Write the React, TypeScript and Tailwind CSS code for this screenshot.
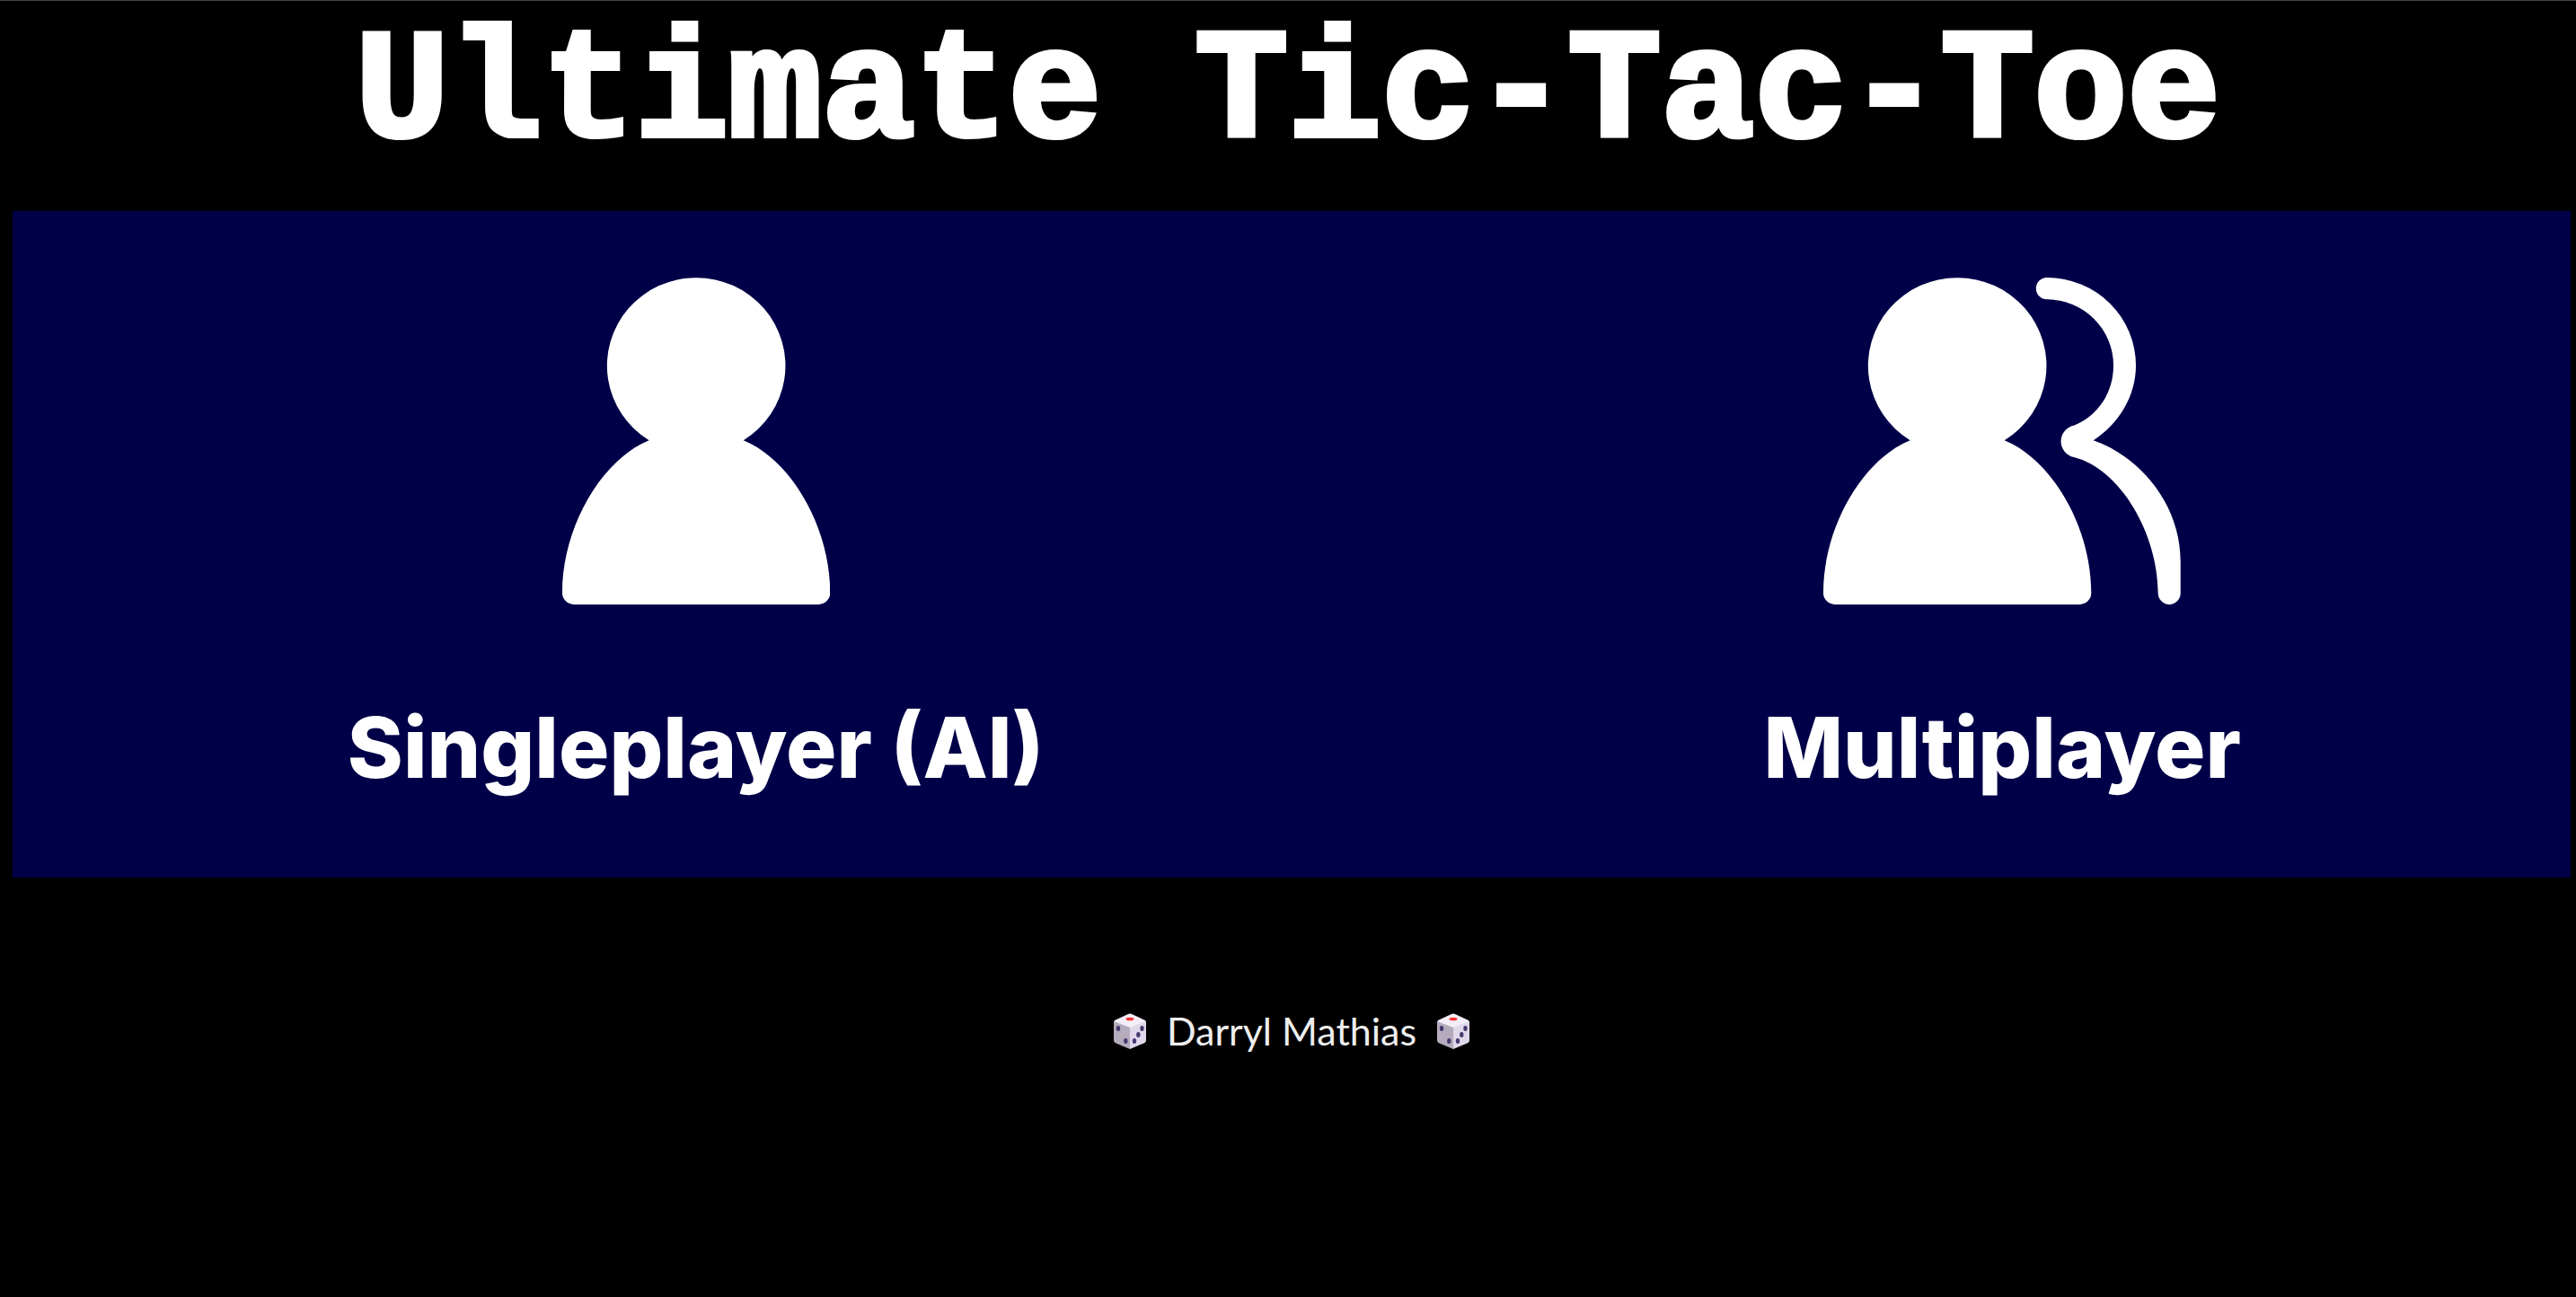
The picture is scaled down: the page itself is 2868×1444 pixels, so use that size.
import type { ReactNode } from "react";

const HEAD_AND_BODY =
  "M96.6 181.3A99.3 98 0 1 1 201.7 181.3C255 203 298.3 278 298.3 351A13 13 0 0 1 285.5 364H12.8A13 13 0 0 1 0 351C0 278 43.3 203 96.6 181.3Z";

const SECOND_PERSON =
  "M249 0A99 98 0 0 1 348 98C348 132 329 163 300.7 181.3C352 199 397.7 252 397.7 316V351.5A12.5 12.5 0 0 1 372.7 351.5C372.7 286 331 213 279 200A18 18 0 0 1 279 164.700C306 154 323 128 323 98A74 73.700 0 0 0 249 24.300A12.100 12.100 0 0 1 249 0Z";

function PersonIcon() {
  return (
    <svg viewBox="0 0 298 364" className="h-[364px] w-[298px]" fill="white" aria-hidden="true">
      <path d={HEAD_AND_BODY} />
    </svg>
  );
}

function PeopleIcon() {
  return (
    <svg viewBox="0 0 398 364" className="h-[364px] w-[398px]" fill="white" aria-hidden="true">
      <path d={HEAD_AND_BODY} />
      <path d={SECOND_PERSON} />
    </svg>
  );
}

function Die() {
  return (
    <svg viewBox="0 0 38 40" className="h-10 w-[38px]" aria-hidden="true">
      <path d="M2 8 17 1Q19 0 21 1L36 8 37 10 19 17 1 10Z" fill="#f3eef8" />
      <path d="M1 9 19 16V40L2.500 33Q1 32 1 30Z" fill="#b4acbc" />
      <path d="M19 16 37 9V30Q37 32 35.500 33L19 40Z" fill="#e0d8ea" />
      <ellipse cx="19" cy="6.500" rx="4.500" ry="1.800" fill="#f8312f" />
      <g fill="#46396f">
        <ellipse cx="6" cy="17" rx="2.200" ry="3" />
        <ellipse cx="14.300" cy="31" rx="2.200" ry="3" />
        <ellipse cx="32.500" cy="17" rx="2.200" ry="3" />
        <ellipse cx="28.300" cy="24" rx="2.200" ry="3" />
        <ellipse cx="24" cy="31" rx="2.200" ry="3" />
      </g>
    </svg>
  );
}

function ModeButton({ icon, label }: { icon: ReactNode; label: string }) {
  return (
    <button type="button" className="flex cursor-pointer flex-col items-center gap-[92px]">
      {icon}
      <span className="whitespace-nowrap font-['Inter',sans-serif] text-[94px] leading-[134px] font-extrabold">
        {label}
      </span>
    </button>
  );
}

export default function App() {
  return (
    <div className="min-h-screen border-t border-[#444] bg-black text-white">
      <header className="flex h-[234px] justify-center">
        <h1 className="whitespace-pre font-['Liberation_Mono',monospace] text-[173px] leading-[208px] font-bold [-webkit-text-stroke:6px_white]">
          Ultimate Tic-Tac-Toe
        </h1>
      </header>
      <main className="mr-1.5 ml-3.5 flex justify-between bg-[#000048] pt-[74px] pr-[12.8%] pb-[78px] pl-[13%]">
        <ModeButton icon={<PersonIcon />} label="Singleplayer (AI)" />
        <ModeButton icon={<PeopleIcon />} label="Multiplayer" />
      </main>
      <footer className="mr-1.5 ml-3.5 flex items-center justify-center gap-[22px] pt-[143px]">
        <Die />
        <p className="font-['Lato',sans-serif] text-[43px] leading-14 text-[#eee]">Darryl Mathias</p>
        <Die />
      </footer>
    </div>
  );
}
